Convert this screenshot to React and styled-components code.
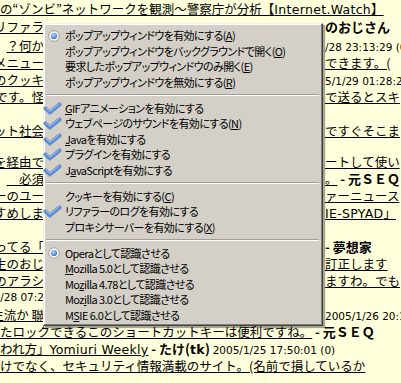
import React from "react";
import styled, { createGlobalStyle } from "styled-components";

const GlobalStyle = createGlobalStyle`
  html, body { margin: 0; padding: 0; }
  body {
    background: #ffffdc;
    font-family: "Noto Sans CJK JP", "Noto Sans", sans-serif;
  }
`;

const Page = styled.div`
  position: relative;
  width: 401px;
  height: 383px;
  overflow: hidden;
  background: #ffffdc;
  color: #000;
  font-family: "Noto Sans CJK JP", "Noto Sans", sans-serif;
  font-size: 12.5px;
`;

const Row = styled.div`
  height: ${(p) => p.$h || 17}px;
  line-height: ${(p) => p.$h || 17}px;
  display: grid;
  grid-template-columns: 44px 279px 1fr;
  white-space: nowrap;
  overflow: hidden;
`;

const FullRow = styled.div`
  height: 17px;
  line-height: 17px;
  white-space: nowrap;
  overflow: hidden;
`;

const LeftCell = styled.div`
  display: flex;
  justify-content: flex-end;
  overflow: hidden;
`;

const RightCell = styled.div`
  overflow: hidden;
  padding-left: 2px;
`;

const Link = styled.span`
  text-decoration: underline;
  text-underline-offset: 1px;
`;

const Bold = styled.span`
  font-weight: 700;
  font-size: 13px;
`;

const Small = styled.span`
  font-family: "DejaVu Sans", "Noto Sans CJK JP", sans-serif;
  font-size: 10.5px;
`;

const Latin = styled.span`
  font-family: "DejaVu Sans", sans-serif;
  font-size: 12.5px;
  letter-spacing: 0.3px;
`;

/* ---- context menu ---- */

const Menu = styled.div`
  position: absolute;
  left: 43px;
  top: 23px;
  width: 280px;
  box-sizing: border-box;
  background: #d4d0c8;
  border: 1px solid;
  border-color: #f4f2ee #404040 #404040 #f4f2ee;
  box-shadow: inset -1px -1px 0 #808080, inset 1px 1px 0 #ffffff,
    2px 2px 1px rgba(0, 0, 0, 0.35);
  padding: 4px 2px 2px 1px;
  font-family: "Noto Sans CJK JP", sans-serif;
  font-size: 11px;
  font-feature-settings: "palt";
  letter-spacing: -0.6px;
  color: #000;
`;

const Item = styled.div`
  display: flex;
  align-items: center;
  height: 15.5px;
  line-height: 15.5px;
  white-space: nowrap;
`;

const IconCell = styled.span`
  width: 20px;
  height: 15.5px;
  display: flex;
  align-items: center;
  justify-content: flex-start;
  flex: none;
`;

const Label = styled.span``;

const Key = styled.span`
  text-decoration: underline;
  text-underline-offset: 1px;
`;

const Separator = styled.div`
  height: 10.5px;
  display: flex;
  align-items: center;
  padding: 0 1px;

  &::after {
    content: "";
    flex: 1;
    border-top: 1px solid #a29e96;
    border-bottom: 1px solid #ffffff;
  }
`;

function Check() {
  return (
    <svg width="19" height="13" viewBox="0 0 19 13" style={{ marginLeft: -2 }}>
      <path
        d="M2.5 6.5 L7 10.5 L16.5 2.5"
        fill="none"
        stroke="#7f96bc"
        strokeWidth="4.2"
        strokeLinecap="round"
        strokeLinejoin="round"
      />
      <path
        d="M2.5 6.5 L7 10.5 L16.5 2.5"
        fill="none"
        stroke="#4f8ae0"
        strokeWidth="2.4"
        strokeLinecap="round"
        strokeLinejoin="round"
      />
      <path
        d="M3 6 L7 9.4 L16 2.2"
        fill="none"
        stroke="#a9cdf7"
        strokeWidth="0.9"
        strokeLinecap="round"
        strokeLinejoin="round"
      />
    </svg>
  );
}

function Radio() {
  return (
    <svg width="12" height="12" viewBox="0 0 12 12" style={{ marginLeft: 3 }}>
      <defs>
        <radialGradient id="dot" cx="40%" cy="35%" r="70%">
          <stop offset="0%" stopColor="#b6d6fb" />
          <stop offset="100%" stopColor="#2f6fd0" />
        </radialGradient>
      </defs>
      <circle cx="6" cy="6" r="5.3" fill="#f3f3f1" stroke="#a8a59e" strokeWidth="1" />
      <circle cx="6" cy="6" r="3.1" fill="url(#dot)" />
    </svg>
  );
}

const groups = [
  [
    { mark: "radio", label: <>ポップアップウィンドウを有効にする(<Key>A</Key>)</> },
    { label: <>ポップアップウィンドウをバックグラウンドで開く(<Key>O</Key>)</> },
    { label: <>要求したポップアップウィンドウのみ開く(<Key>E</Key>)</> },
    { label: <>ポップアップウィンドウを無効にする(<Key>R</Key>)</> },
  ],
  [
    { mark: "check", label: <><Key>G</Key>IFアニメーションを有効にする</> },
    { mark: "check", label: <>ウェブページのサウンドを有効にする(<Key>N</Key>)</> },
    { mark: "check", label: <><Key>J</Key>avaを有効にする</> },
    { mark: "check", label: <>プラグインを有効にする</> },
    { mark: "check", label: <>J<Key>a</Key>vaScriptを有効にする</> },
  ],
  [
    { label: <>クッキーを有効にする(<Key>C</Key>)</> },
    { mark: "check", label: <>リファラーのログを有効にする</> },
    { label: <>プロキシサーバーを有効にする(<Key>X</Key>)</> },
  ],
  [
    { mark: "radio", label: <>Operaとして認識させる</> },
    { label: <><Key>M</Key>ozilla 5.0として認識させる</> },
    { label: <>Mo<Key>z</Key>illa 4.78として認識させる</> },
    { label: <>Moz<Key>i</Key>lla 3.0として認識させる</> },
    { label: <>M<Key>S</Key>IE 6.0として認識させる</> },
  ],
];

const rows = [
  {
    full: (
      <Link>
        の“ゾンビ”ネットワークを観測～警察庁が分析【<Latin>Internet.Watch</Latin>】
      </Link>
    ),
  },
  { h: 20, left: <Link>リファラ</Link>, right: <Bold>のおじさん</Bold> },
  { left: <Link>？何か</Link>, right: <Small>/28 23:13:29 (0)</Small> },
  { left: <Link>メニュー</Link>, right: <Link>できます。(</Link> },
  { left: <Link>のクッキ</Link>, right: <Small>5/1/29 01:28:26</Small> },
  { left: <Link>です。怪</Link>, right: <Link>で送るとスキ</Link> },
  { left: "", right: "" },
  { left: <Link>ット社会</Link>, right: <Link>ですぐそこま</Link> },
  { h: 14, left: "", right: "" },
  { left: <Link>を経由で</Link>, right: <Link>ートして使い</Link> },
  { left: <Link>　必須</Link>, right: <><Link>。</Link> <Bold>- 元ＳＥＱ</Bold></> },
  { left: <Link>ーのユー</Link>, right: <Link>ァーニュース</Link> },
  { left: <Link>すめしま</Link>, right: <Link><Latin>IE-SPYAD</Latin>」</Link> },
  { left: "", right: "" },
  { left: <Link>使ってる「</Link>, right: <> <Bold>- 夢想家</Bold></> },
  { left: <Link>生のおじ</Link>, right: <Link>訂正します</Link> },
  { left: <Link>のアラシ</Link>, right: <Link>ますわ。でも</Link> },
  { left: <Small>1/28 07:2</Small>, right: "" },
  { left: <Link>主流か 聯</Link>, right: <Small>2005/1/26 20:11</Small> },
  {
    full: (
      <>
        <Link>たロックできるこのショートカットキーは便利ですね。</Link> <Bold>- 元ＳＥＱ</Bold>
      </>
    ),
  },
  {
    full: (
      <>
        <Link>
          われ方」<Latin>Yomiuri Weekly</Latin>
        </Link>{" "}
        <Bold>- たけ(<Latin>tk</Latin>)</Bold> <Small>2005/1/25 17:50:01 (0)</Small>
      </>
    ),
  },
  { full: <Link>けでなく、セキュリティ情報満載のサイト。(名前で損しているか</Link> },
];

export default function App() {
  return (
    <Page>
      <GlobalStyle />
      {rows.map((r, i) =>
        r.full ? (
          <FullRow key={i}>{r.full}</FullRow>
        ) : (
          <Row key={i} $h={r.h}>
            <LeftCell>{r.left}</LeftCell>
            <div />
            <RightCell>{r.right}</RightCell>
          </Row>
        )
      )}

      <Menu>
        {groups.map((g, gi) => (
          <React.Fragment key={gi}>
            {gi > 0 && <Separator />}
            {g.map((it, ii) => (
              <Item key={ii}>
                <IconCell>
                  {it.mark === "check" && <Check />}
                  {it.mark === "radio" && <Radio />}
                </IconCell>
                <Label>{it.label}</Label>
              </Item>
            ))}
          </React.Fragment>
        ))}
      </Menu>
    </Page>
  );
}
